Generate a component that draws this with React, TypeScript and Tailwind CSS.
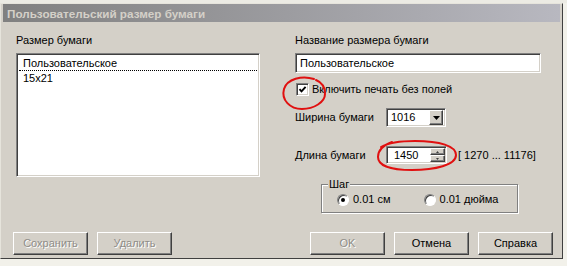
import React from "react";

const sunken =
  "border border-t-[#808080] border-l-[#808080] border-r-white border-b-white shadow-[inset_1px_1px_0_#404040,inset_-1px_-1px_0_#d4d0c8]";
const raised =
  "border border-t-white border-l-white border-r-[#404040] border-b-[#404040] shadow-[inset_-1px_-1px_0_#808080]";

function Btn({ label, disabled }: { label: string; disabled?: boolean }) {
  return (
    <div
      className={`w-[75px] h-[23px] bg-[#d4d0c8] flex items-center justify-center ${raised} ${
        disabled ? "text-[#8f8d88] [text-shadow:1px_1px_0_#ffffff]" : "text-black"
      }`}
    >
      {label}
    </div>
  );
}

function Radio({ checked }: { checked?: boolean }) {
  return (
    <div className="w-[12px] h-[12px] rounded-full bg-white border border-t-[#808080] border-l-[#808080] border-r-white border-b-white shadow-[inset_1px_1px_0_#404040] flex items-center justify-center">
      {checked && <div className="w-[4px] h-[4px] rounded-full bg-black" />}
    </div>
  );
}

export default function App() {
  return (
    <div className="w-[567px] h-[266px] bg-[#f2f1ea] relative overflow-hidden font-['Liberation_Sans',Arial,sans-serif] text-[11px] leading-[13px] text-black">
      <div className="h-[3px] bg-[#ecebe4]" />
      <div className="w-[563px] h-[256px] bg-[#d4d0c8] border border-t-[#e6e4dc] border-l-[#e6e4dc] border-r-[#404040] border-b-[#404040] px-[2px] flex flex-col">
        {/* Title bar */}
        <div className="h-[18px] bg-gradient-to-r from-[#808080] to-[#b8b8c0] flex items-center pl-[4px] font-bold text-[11.7px] text-[#d4d0c8]">
          Пользовательский размер бумаги
        </div>
        {/* Content */}
        <div className="h-[210px] flex flex-row items-start">
          {/* Left column */}
          <div className="ml-[13px] mt-[12px] w-[244px] flex flex-col">
            <div className="h-[13px]">Размер бумаги</div>
            <div className={`mt-[6px] h-[124px] bg-white ${sunken} p-[2px] flex flex-col`}>
              <div className="h-[15px] pl-[4px] flex items-center border-b border-dotted border-black">
                Пользовательское
              </div>
              <div className="h-[15px] pl-[4px] flex items-center">15x21</div>
            </div>
          </div>
          {/* Right column */}
          <div className="ml-[35px] mt-[12px] w-[246px] flex flex-col">
            <div className="h-[13px]">Название размера бумаги</div>
            <div className={`mt-[6px] h-[20px] bg-white ${sunken} pl-[4px] flex items-center`}>
              Пользовательское
            </div>
            <div className="mt-[10px] h-[13px] flex items-center pl-[1px]">
              <div className={`w-[13px] h-[13px] bg-white ${sunken} flex items-center justify-center`}>
                <svg width="9" height="9" viewBox="0 0 9 9">
                  <path d="M1.5 4.2 L3.5 6.4 L7.6 1.8" stroke="#000" strokeWidth="1.9" fill="none" />
                </svg>
              </div>
              <span className="ml-[3px]">Включить печать без полей</span>
            </div>
            <div className="mt-[12px] h-[19px] flex items-center">
              <span className="w-[91px]">Ширина бумаги</span>
              <div className={`w-[60px] h-[19px] bg-white ${sunken} flex items-center justify-between p-[2px]`}>
                <span className="pl-[2px]">1016</span>
                <div className={`w-[14px] h-[15px] bg-[#d4d0c8] ${raised} flex items-center justify-center`}>
                  <svg width="7" height="4" viewBox="0 0 7 4">
                    <path d="M0 0 H7 L3.5 4 Z" fill="#000" />
                  </svg>
                </div>
              </div>
            </div>
            <div className="mt-[19px] h-[18px] flex items-center">
              <span className="w-[91px]">Длина бумаги</span>
              <div className={`w-[61px] h-[18px] bg-white ${sunken} flex items-center justify-between p-[1px]`}>
                <span className="pl-[6px]">1450</span>
                <div className="w-[15px] h-[14px] flex flex-col">
                  <div className={`h-[7px] bg-[#d4d0c8] ${raised} flex items-center justify-center`}>
                    <svg width="3" height="2" viewBox="0 0 3 2">
                      <path d="M1.5 0 L3 2 H0 Z" fill="#404040" />
                    </svg>
                  </div>
                  <div className={`h-[7px] bg-[#d4d0c8] ${raised} flex items-center justify-center`}>
                    <svg width="3" height="2" viewBox="0 0 3 2">
                      <path d="M0 0 H3 L1.5 2 Z" fill="#404040" />
                    </svg>
                  </div>
                </div>
              </div>
              <span className="ml-[11px]">[ 1270 ... 11176]</span>
            </div>
            <div className="mt-[20px] ml-[26px] w-[197px] h-[29px] relative border border-[#808080] shadow-[1px_1px_0_#ffffff,inset_1px_1px_0_#ffffff] flex items-center">
              <span className="absolute left-[6px] top-[-7px] bg-[#d4d0c8] px-[1px] leading-[13px]">Шаг</span>
              <div className="mt-[2px] ml-[15px] flex items-center">
                <Radio checked />
                <span className="ml-[4px]">0.01 см</span>
              </div>
              <div className="mt-[2px] ml-[33px] flex items-center overflow-hidden w-[77px]">
                <Radio />
                <span className="ml-[4px] whitespace-nowrap">0.01 дюйма</span>
              </div>
            </div>
          </div>
        </div>
        {/* Buttons */}
        <div className="h-[23px] flex items-center pl-[10px] pr-[7px]">
          <div className="flex gap-[9px]">
            <Btn label="Сохранить" disabled />
            <Btn label="Удалить" disabled />
          </div>
          <div className="ml-auto flex gap-[9px]">
            <Btn label="OK" disabled />
            <Btn label="Отмена" />
            <Btn label="Справка" />
          </div>
        </div>
      </div>
      {/* Hand-drawn red annotations */}
      <svg className="absolute left-0 top-0 pointer-events-none" width="567" height="266" viewBox="0 0 567 266">
        <path
          d="M314 79 C302 75, 287 79, 284 89 C281 100, 290 109, 302 109 C314 109, 325 102, 325 94 C325 87, 321 82, 316 80"
          stroke="#e01010"
          strokeWidth="2"
          fill="none"
          strokeLinecap="round"
        />
        <path
          d="M392 142 C384 145, 378 150, 378 157 C378 166, 392 170, 412 170 C435 170, 456 165, 456 155 C456 146, 440 141, 415 141 C402 141, 388 143, 381 147"
          stroke="#e01010"
          strokeWidth="2"
          fill="none"
          strokeLinecap="round"
        />
      </svg>
    </div>
  );
}
